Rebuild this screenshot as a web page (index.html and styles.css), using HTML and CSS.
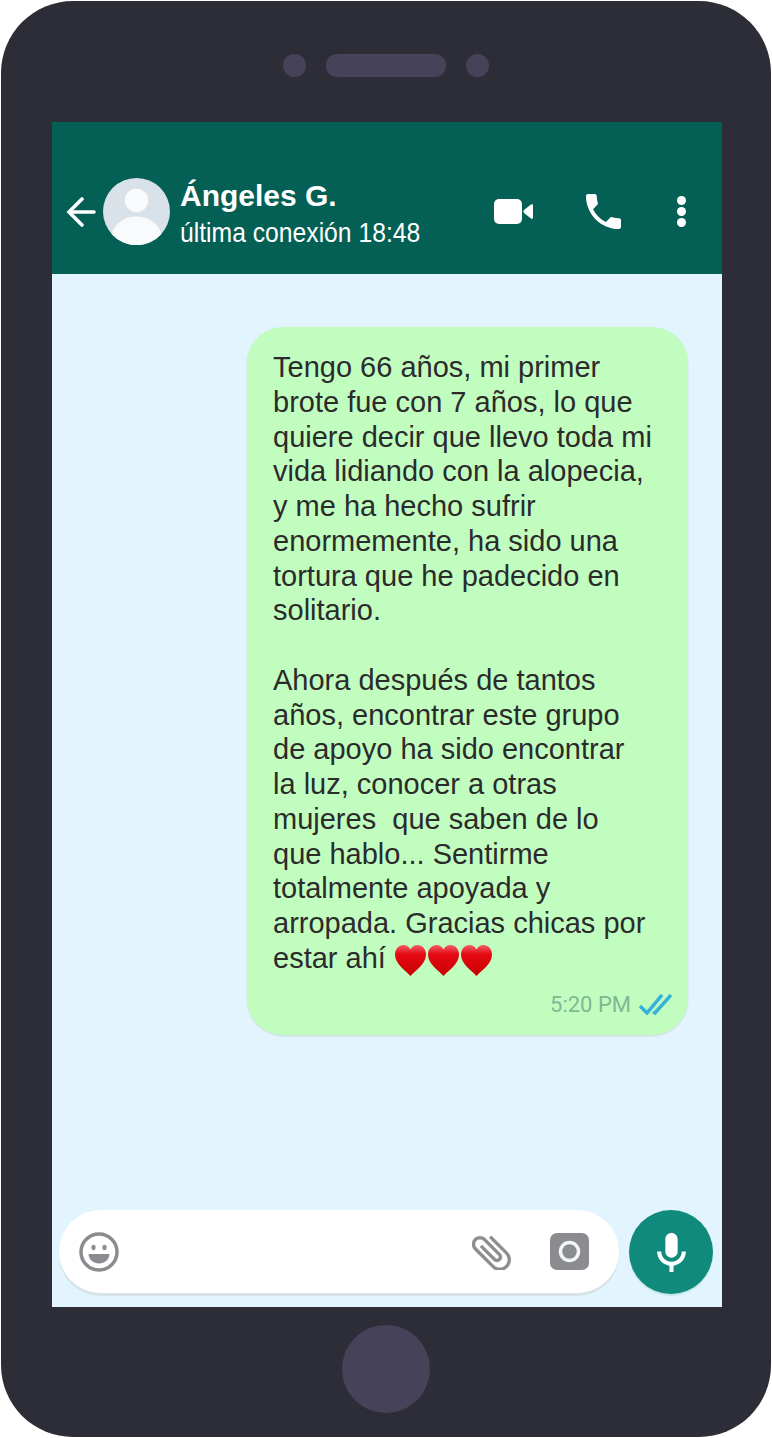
FILE: index.html
```html
<!DOCTYPE html>
<html lang="es">
<head>
    <meta charset="UTF-8">
    <meta name="viewport" content="width=device-width, initial-scale=1.0">
    <title>Chat</title>
    <link rel="stylesheet" href="styles.css">
</head>
<body>
    <svg class="defs" width="0" height="0">
        <defs>
            <linearGradient id="heartFill" x1="0" y1="0" x2="0" y2="1">
                <stop offset="0" stop-color="#f2606a"/>
                <stop offset="0.3" stop-color="#e40a12"/>
                <stop offset="1" stop-color="#c80000"/>
            </linearGradient>
            <symbol id="heart" viewBox="0 0 31 31">
                <path fill="url(#heartFill)" d="M15.5 31C11 26 0 19 0 9.5 0 4 4 0 8.5 0c3 0 5.6 1.6 7 4.5C16.900 1.600 19.500 0 22.500 0 27 0 31 4 31 9.500 31 19 20 26 15.500 31z"/>
            </symbol>
        </defs>
    </svg>
    <div class="phone">
        <div class="notch">
            <span class="sensor"></span>
            <span class="speaker"></span>
            <span class="sensor"></span>
        </div>
        <div class="screen">
            <div class="header">
                <svg class="back" viewBox="0 0 30 30">
                    <path d="M15 2 2 15l13 13M2 15h25" fill="none" stroke="#fff" stroke-width="3.600" stroke-linecap="round"/>
                </svg>
                <svg class="avatar" viewBox="0 0 67 67">
                    <circle cx="33.500" cy="33.500" r="33.500" fill="#d9e2e8"/>
                    <circle cx="33.500" cy="22.500" r="11.800" fill="#f8fafb"/>
                    <path d="M8.500 56C12 45 21 38.500 33.500 38.500S55 45 58.500 56a33.500 33.500 0 0 1-50 0z" fill="#f8fafb"/>
                </svg>
                <div class="contact">
                    <div class="name">Ángeles G.</div>
                    <div class="last-seen">última conexión 18:48</div>
                </div>
                <div class="actions">
                    <svg class="video-icon" viewBox="0 0 39 25">
                        <rect width="28" height="25" rx="5" fill="#fff"/>
                        <path d="M30 11 37 5.500c1-.7 2-.3 2 1v12c0 1.300-1 1.700-2 1l-7-5.500c-.8-.8-.8-2.200 0-3z" fill="#fff"/>
                    </svg>
                    <svg class="call-icon" viewBox="3 3 18 18">
                        <path fill="#fff" d="M20 15.500c-1.250 0-2.450-.2-3.570-.57-.35-.11-.74-.03-1.020.24l-2.200 2.200c-2.830-1.440-5.150-3.750-6.590-6.590l2.200-2.210c.28-.26.36-.65.25-1C8.700 6.450 8.500 5.250 8.500 4c0-.55-.45-1-1-1H4c-.55 0-1 .45-1 1 0 9.390 7.610 17 17 17 .55 0 1-.45 1-1v-3.500c0-.55-.45-1-1-1z"/>
                    </svg>
                    <div class="menu-dots"><span></span><span></span><span></span></div>
                </div>
            </div>
            <div class="chat">
                <div class="bubble">
                    <p class="message">Tengo 66 años, mi primer<br>brote fue con 7 años, lo que<br>quiere decir que llevo toda mi<br>vida lidiando con la alopecia,<br>y me ha hecho sufrir<br>enormemente, ha sido una<br>tortura que he padecido en<br>solitario.<br><br>Ahora después de tantos<br>años, encontrar este grupo<br>de apoyo ha sido encontrar<br>la luz, conocer a otras<br>mujeres &nbsp;que saben de lo<br>que hablo... Sentirme<br>totalmente apoyada y<br>arropada. Gracias chicas por<br>estar ahí <span class="hearts"><svg class="heart"><use href="#heart"/></svg><svg class="heart"><use href="#heart"/></svg><svg class="heart"><use href="#heart"/></svg></span></p>
                    <div class="meta">
                        <span class="time">5:20 PM</span>
                        <svg class="ticks" viewBox="0 0 33 21">
                            <path d="M1 12l7 7L23 1M14 18l2 1L32 1" fill="none" stroke="#35b1d9" stroke-width="3.500"/>
                        </svg>
                    </div>
                </div>
            </div>
            <div class="composer">
                <div class="input-box">
                    <svg class="smiley" viewBox="0 0 40 40">
                        <circle cx="20" cy="20" r="18" fill="none" stroke="#8a8c8f" stroke-width="3.500"/>
                        <ellipse cx="14.500" cy="15.500" rx="2.100" ry="2.800" fill="#8a8c8f"/>
                        <ellipse cx="25.500" cy="15.500" rx="2.100" ry="2.800" fill="#8a8c8f"/>
                        <path d="M9.500 22h21c-.5 6-5 9.500-10.500 9.500S10 28 9.500 22z" fill="#8a8c8f"/>
                    </svg>
                    <div class="spacer"></div>
                    <svg class="clip" viewBox="0 0 40 36">
                        <g transform="translate(20 18) rotate(-45) scale(2) translate(-12.500 -12)">
                            <path fill="#8a8c8f" stroke="#8a8c8f" stroke-width=".2" d="M16.500 6v11.500c0 2.210-1.790 4-4 4s-4-1.790-4-4V5c0-1.380 1.120-2.500 2.500-2.500s2.500 1.120 2.500 2.500v10.500c0 .55-.45 1-1 1s-1-.45-1-1V6H10v9.500c0 1.380 1.120 2.500 2.500 2.500s2.500-1.120 2.500-2.500V5c0-2.210-1.790-4-4-4S7 2.790 7 5v12.500c0 3.040 2.460 5.500 5.500 5.500s5.500-2.460 5.500-5.500V6h-1.500z"/>
                        </g>
                    </svg>
                    <svg class="camera" viewBox="0 0 39 37">
                        <rect width="39" height="37" rx="7" fill="#8a8c8f"/>
                        <circle cx="19.500" cy="18.500" r="9" fill="#8a8c8f" stroke="#f4f5f5" stroke-width="3.500"/>
                    </svg>
                </div>
                <div class="mic-btn">
                    <svg class="mic" viewBox="5 2 14 19">
                        <path fill="#fff" d="M12 14c1.660 0 3-1.340 3-3V5c0-1.660-1.340-3-3-3S9 3.340 9 5v6c0 1.660 1.340 3 3 3zM17 11c0 2.760-2.240 5-5 5s-5-2.240-5-5H5c0 3.530 2.610 6.430 6 6.920V21h2v-3.080c3.390-.49 6-3.390 6-6.920h-2z"/>
                    </svg>
                </div>
            </div>
        </div>
        <div class="home-row">
            <span class="home-btn"></span>
        </div>
    </div>
</body>
</html>
```

FILE: styles.css
```css
* {
    box-sizing: border-box;
}

body {
    margin: 0;
    background: #fff;
    font-family: "Liberation Sans", Arial, sans-serif;
}

.defs {
    display: block;
    height: 0;
}

.phone {
    width: 770px;
    height: 1436px;
    margin: 1px;
    padding: 0 49px 0 51px;
    background: #2d2d37;
    border-radius: 72px;
    display: flex;
    flex-direction: column;
}

.notch {
    height: 121px;
    padding: 53px 2px 0 0;
    display: flex;
    justify-content: center;
    align-items: flex-start;
    gap: 20px;
}

.sensor {
    width: 23px;
    height: 23px;
    border-radius: 50%;
    background: #46425a;
}

.speaker {
    width: 120px;
    height: 23px;
    border-radius: 11px;
    background: #46425a;
}

.screen {
    height: 1185px;
    display: flex;
    flex-direction: column;
    background: #e2f5fe;
}

.header {
    height: 152px;
    padding: 56px 0 0 14px;
    background: #045f55;
    color: #fff;
    display: flex;
    align-items: flex-start;
}

.back {
    width: 32px;
    height: 30px;
    margin-top: 19px;
    flex: none;
}

.avatar {
    width: 67px;
    height: 67px;
    margin-left: 5px;
    flex: none;
}

.contact {
    width: 314px;
    margin-left: 10px;
}

.name {
    font-size: 30px;
    font-weight: bold;
    line-height: 36px;
}

.last-seen {
    font-size: 28px;
    line-height: 38px;
    white-space: nowrap;
    transform: scaleX(0.882);
    transform-origin: left;
}

.actions {
    display: flex;
    align-items: center;
    height: 67px;
}

.video-icon {
    width: 39px;
    height: 25px;
}

.call-icon {
    width: 35px;
    height: 35px;
    margin-left: 53px;
}

.menu-dots {
    margin-left: 56px;
    display: flex;
    flex-direction: column;
    gap: 2px;
}

.menu-dots span {
    width: 9px;
    height: 9px;
    border-radius: 50%;
    background: #fff;
}

.chat {
    flex: 1;
    padding: 53px 34px 0 0;
    display: flex;
    justify-content: flex-end;
    align-items: flex-start;
}

.bubble {
    width: 441px;
    height: 708px;
    padding: 23px 16px 0 26px;
    background: #c2fdc0;
    border-radius: 36px;
    box-shadow: 0 1px 2px #c5ddd0;
}

.message {
    margin: 0;
    font-size: 29px;
    line-height: 34.76px;
    color: #2b2b2b;
    white-space: nowrap;
}

.hearts {
    display: inline-flex;
    gap: 2px;
    margin-left: 1px;
    vertical-align: -8px;
}

.heart {
    width: 31px;
    height: 31px;
    display: block;
}

.meta {
    margin-top: 16px;
    display: flex;
    justify-content: flex-end;
    align-items: center;
    gap: 8px;
}

.time {
    font-family: Roboto, "Liberation Sans", sans-serif;
    font-size: 22px;
    color: #7fb992;
}

.ticks {
    width: 33px;
    height: 21px;
}

.composer {
    padding: 0 9px 13px 7px;
    display: flex;
    gap: 10px;
}

.input-box {
    width: 560px;
    height: 83px;
    padding: 0 30px 0 20px;
    background: #fff;
    border-radius: 42px;
    box-shadow: 0 3px 1px #d5e3e8;
    display: flex;
    align-items: center;
}

.smiley {
    width: 40px;
    height: 40px;
}

.spacer {
    flex: 1;
}

.clip {
    width: 40px;
    height: 36px;
    margin-right: 38px;
}

.camera {
    width: 39px;
    height: 37px;
}

.mic-btn {
    width: 84px;
    height: 84px;
    border-radius: 50%;
    background: #108a7c;
    display: flex;
    justify-content: center;
    align-items: center;
    box-shadow: 0 2px 1px #c5e6e6;
}

.mic {
    width: 29px;
    height: 39px;
}

.home-row {
    flex: 1;
    padding: 18px 2px 0 0;
    display: flex;
    justify-content: center;
    align-items: flex-start;
}

.home-btn {
    width: 88px;
    height: 88px;
    border-radius: 50%;
    background: #46425a;
}
```
